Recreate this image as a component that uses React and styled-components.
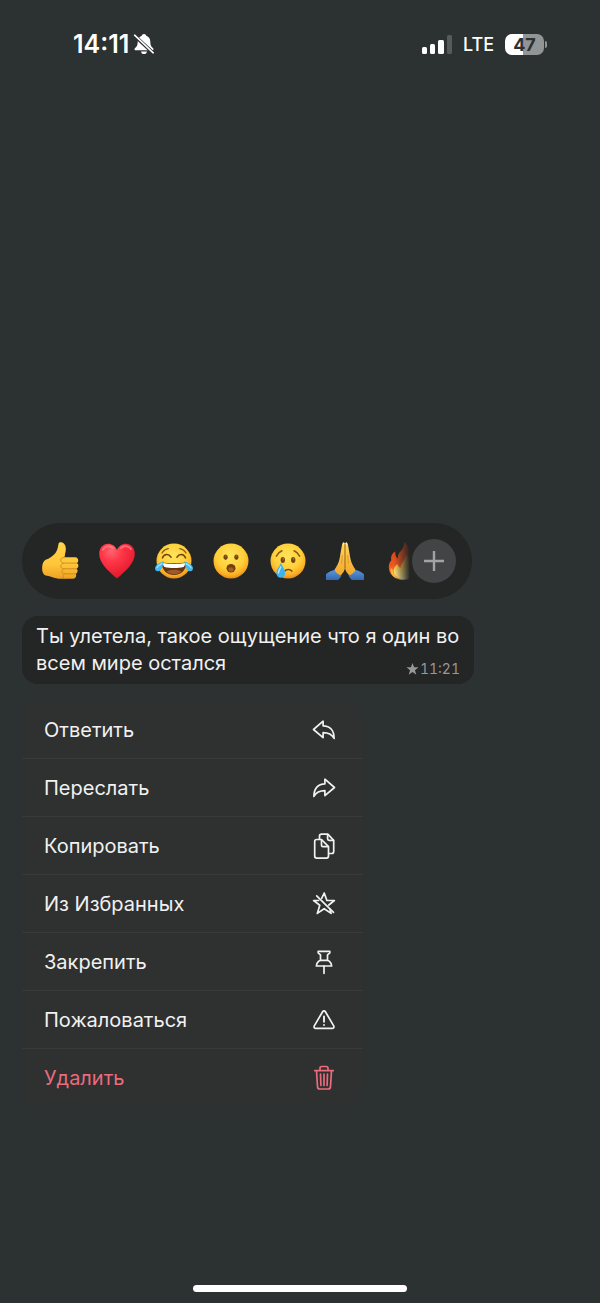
import styled, { createGlobalStyle } from "styled-components";

const App = () => {
  return (
    <Screen>
      <GlobalStyle />
      <StatusBar>
        <Clock>
          <time>14:11</time>
          <BellOff />
        </Clock>
        <Network>
          <Signal />
          <Carrier>LTE</Carrier>
          <Battery>
            <Charge>47</Charge>
            <BatteryTip />
          </Battery>
        </Network>
      </StatusBar>

      <Stage>
        <ReactionBar>
          <ReactionList>
            {reactions.map(({ label, Icon }) => (
              <Reaction key={label} type="button" aria-label={label}>
                <Icon />
              </Reaction>
            ))}
          </ReactionList>
          <MoreButton type="button" aria-label="Ещё">
            <svg width="22" height="22" viewBox="0 0 22 22" fill="none" stroke="#a3a3a4" strokeWidth="2.4">
              <path d="M11 1v20M1 11h20" />
            </svg>
          </MoreButton>
        </ReactionBar>

        <Message>
          <span>Ты улетела, такое ощущение что я один во всем мире остался</span>
          <Meta>
            <svg width="13" height="12" viewBox="0 0 24 23" fill="currentColor">
              <path d="M12 0l3 8.300h8.600l-6.900 5.400 2.600 8.800-7.300-5.200-7.300 5.200 2.600-8.800L.4 8.300H9z" />
            </svg>
            <time>11:21</time>
          </Meta>
        </Message>

        <Menu>
          {actions.map(({ label, Icon, danger }) => (
            <MenuItem key={label}>
              <MenuButton type="button" $danger={danger}>
                {label}
                <Icon />
              </MenuButton>
            </MenuItem>
          ))}
        </Menu>
      </Stage>

      <HomeArea>
        <HomeIndicator />
      </HomeArea>
    </Screen>
  );
};

export default App;

// status bar icons
const BellOff = () => (
  <svg width="22" height="22" viewBox="0 0 22 22">
    <path
      d="M11 1c-1.300 0-2 .8-2.200 1.700C6 3.600 4.700 6 4.700 8.800c0 3.400-.8 4.700-2.300 6-.7.7-.9 1.100-.9 1.500 0 .7.500 1 1.200 1h16.600c.7 0 1.200-.3 1.200-1 0-.4-.2-.8-.9-1.500-1.500-1.300-2.300-2.600-2.300-6 0-2.800-1.300-5.200-4.100-6.100C13 1.800 12.300 1 11 1z"
      fill="#fff"
    />
    <path d="M8 18.400h6c-.2 1.600-1.400 2.600-3 2.600s-2.800-1-3-2.600z" fill="#fff" />
    <path d="M1 2.200l19.500 18" stroke="#2c3131" strokeWidth="3.600" />
    <path d="M1.600 2.200l18.600 17.600" stroke="#fff" strokeWidth="1.600" strokeLinecap="round" />
  </svg>
);

const Signal = () => (
  <svg width="30" height="19" viewBox="0 0 30 19" fill="#fff">
    <rect x="0" y="12" width="5" height="7" rx="1.500" />
    <rect x="8" y="9" width="5" height="10" rx="1.500" />
    <rect x="16" y="5" width="6" height="14" rx="1.500" />
    <rect x="25" y="0" width="5" height="19" rx="1.500" opacity="0.2" />
  </svg>
);

// reactions
const ThumbUp = () => (
  <svg viewBox="0 0 38 38">
    <defs>
      <linearGradient id="thumbSkin" x1="0" y1="0" x2="0" y2="1">
        <stop offset="0" stopColor="#ffd54b" />
        <stop offset="0.6" stopColor="#ffc63a" />
        <stop offset="1" stopColor="#eda023" />
      </linearGradient>
    </defs>
    <path
      d="M17.600 1.600C18 .2 19.600-.2 21.300.5c2.600 1.100 3.700 3.900 3.500 7-.1 2.500-1 5-1.200 7.800h10.600c1.900 0 3 1.400 3 3.100 0 1.300-.6 2.300-1.600 2.700 1.200.4 1.800 1.400 1.800 2.700 0 1.400-.8 2.500-2 2.900.9.500 1.300 1.400 1.200 2.500-.1 1.200-.9 2.200-2 2.500.5.600.7 1.200.6 2.100-.2 1.800-1.500 2.900-3.400 2.900H23c-5 .5-8.600-.2-12.200-1.700-2.300-1-4.400-1.100-6.200-1.500-2.500-.8-3.500-3.700-3.500-7.200 0-3.900 1.200-7.300 3.600-8.500 3.700-1.500 6.500-3.100 9.600-6.600 2.500-2.900 2.700-6.700 3.300-9.600z"
      fill="url(#thumbSkin)"
    />
    <g fill="none" stroke="#c98a20" strokeWidth="0.900" strokeLinecap="round">
      <path d="M23.500 15.300c-2.600.2-3.800 1.400-3.800 3 0 1.500 1 2.700 2.800 2.800h13" />
      <path d="M22.500 21.200c-3.600.3-3.700 5.400 0 5.600h12.600" />
      <path d="M23 26.900c-2.800.4-2.900 4.600 0 4.900h11" />
      <path d="M23.500 31.900c-2.200.7-2.200 4.200.4 4.800" />
    </g>
  </svg>
);

const Heart = () => (
  <svg viewBox="0 0 38 38">
    <defs>
      <radialGradient id="heartRed" cx="0.35" cy="0.22" r="0.85">
        <stop offset="0" stopColor="#ff6470" />
        <stop offset="0.35" stopColor="#ff3647" />
        <stop offset="1" stopColor="#dc1428" />
      </radialGradient>
    </defs>
    <path
      d="M19 36.500C11 29.500 1.200 21.500 1.200 11.700 1.200 6 5 1.800 10 1.800c4 0 7.300 2.200 9 6.200 1.700-4 5-6.200 9-6.200 5 0 8.800 4.200 8.800 9.900 0 9.800-9.800 17.800-17.800 24.800z"
      fill="url(#heartRed)"
    />
    <path d="M5 7.500c2-3.700 7-4.600 10.200-1.400M23 6c3.300-3.100 8-2.200 10 1.200" fill="none" stroke="#ff9098" strokeWidth="2" strokeLinecap="round" opacity="0.6" />
  </svg>
);

const Face = ({ id, children }) => (
  <svg viewBox="0 0 38 38">
    <defs>
      <radialGradient id={id} cx="0.48" cy="0.35" r="0.65">
        <stop offset="0" stopColor="#ffe45a" />
        <stop offset="0.6" stopColor="#ffcf39" />
        <stop offset="0.85" stopColor="#faae25" />
        <stop offset="1" stopColor="#e88b19" />
      </radialGradient>
    </defs>
    <circle cx="19" cy="19" r="17.500" fill={`url(#${id})`} />
    {children}
  </svg>
);

const Joy = () => (
  <Face id="joyFace">
    <path d="M7.500 15.800c1.800-4.300 6.200-4.400 8.500-.6M22 15.200c2.300-3.800 6.700-3.700 8.500.6" fill="none" stroke="#704012" strokeWidth="1.600" strokeLinecap="round" />
    <path d="M7 11c1.600-2.500 3.800-4 6.300-4.300M31 11c-1.600-2.500-3.800-4-6.300-4.300" fill="none" stroke="#8c5517" strokeWidth="1.300" strokeLinecap="round" />
    <path d="M6.500 20.300c7 1.300 18 1.300 25 0C31.300 27.800 26.500 33 19 33S6.700 27.800 6.500 20.300z" fill="#61360f" />
    <path d="M7.700 21c7 1.200 15.600 1.200 22.600 0-.2 1.800-.8 3-1.800 4-5.500 1.300-13.500 1.300-19 0-1-1-1.600-2.200-1.800-4z" fill="#fff" />
    <path d="M11.500 29.400c4.300-2.300 10.700-2.300 15 0-3.800 3.700-11.200 3.700-15 0z" fill="#a5562c" />
    <path d="M8.700 19.200C8 24 6.400 29 3 29.200.6 29.300-.5 27.300.3 25c1-2.800 4.700-4.500 8.400-5.800z" fill="#40b9f4" />
    <path d="M29.300 19.200c.7 4.800 2.300 9.800 5.700 10 2.400.1 3.500-1.900 2.700-4.200-1-2.800-4.700-4.500-8.400-5.800z" fill="#40b9f4" />
    <path d="M6.800 21.600c-2.300 1.200-4.300 2.600-4.800 4.100M31.200 21.600c2.300 1.200 4.300 2.600 4.800 4.100" fill="none" stroke="#a3e4ff" strokeWidth="1.200" strokeLinecap="round" />
  </Face>
);

const Wow = () => (
  <Face id="wowFace">
    <ellipse cx="13.600" cy="15.200" rx="2.100" ry="2.700" fill="#764611" />
    <ellipse cx="24.400" cy="15.200" rx="2.100" ry="2.700" fill="#764611" />
    <circle cx="13.900" cy="14" r="0.700" fill="#b27a2d" />
    <circle cx="24.700" cy="14" r="0.700" fill="#b27a2d" />
    <ellipse cx="19" cy="26.300" rx="4.500" ry="4.200" fill="#733f0d" />
    <ellipse cx="19" cy="27.500" rx="2.600" ry="2.200" fill="#a2601c" />
  </Face>
);

const Cry = () => (
  <Face id="cryFace">
    <path d="M7.400 14.200c1.300-2.700 3-4.400 5.500-5.400M30.600 14.200c-1.300-2.700-3-4.400-5.500-5.400" fill="none" stroke="#8c5517" strokeWidth="1.500" strokeLinecap="round" />
    <ellipse cx="13.800" cy="18" rx="2.200" ry="2.900" fill="#764611" />
    <ellipse cx="24.200" cy="18" rx="2.200" ry="2.900" fill="#764611" />
    <circle cx="14.200" cy="16.800" r="0.700" fill="#c59044" />
    <circle cx="24.600" cy="16.800" r="0.700" fill="#c59044" />
    <path d="M15.500 29.400c1.800-2.400 5.400-2.500 7.300-.3" fill="none" stroke="#764611" strokeWidth="1.500" strokeLinecap="round" />
    <path d="M12 20.500c-1.300 4-4.600 6.700-4.600 10.400 0 3 1.900 4.900 4.300 4.900s4.500-1.900 4.500-4.700c0-4-3.300-6.600-4.200-10.600z" fill="#3eb3ec" />
    <path d="M11.700 25c-.7 2.200-2.400 3.800-2.300 6" fill="none" stroke="#b5eaff" strokeWidth="1.500" strokeLinecap="round" />
  </Face>
);

const Pray = () => (
  <svg viewBox="0 0 38 38">
    <defs>
      <linearGradient id="praySkin" x1="0" y1="0" x2="0" y2="1">
        <stop offset="0" stopColor="#ffd75c" />
        <stop offset="1" stopColor="#f2a72c" />
      </linearGradient>
      <linearGradient id="praySleeve" x1="0" y1="0" x2="0" y2="1">
        <stop offset="0" stopColor="#5b98dd" />
        <stop offset="1" stopColor="#3569ae" />
      </linearGradient>
    </defs>
    <path d="M10 27.500C5.500 28.500.8 30.800 0 32.500V38h12c2-1.500 3.200-3.300 3.500-5.500L10 27.500zM28 27.500c4.500 1 9.200 3.300 10 5V38H26c-2-1.500-3.200-3.300-3.500-5.500z" fill="url(#praySleeve)" />
    <path
      d="M18.900 1.200c-1.400-1-2.700-.2-2.900 1.600L13.700 16c-.7 5-3.200 8.300-5.200 11.800 1.300 2.800 3.500 4.700 6.200 5.400 2.500-1.900 4-4.800 4.300-7.700.3 2.900 1.800 5.800 4.300 7.700 2.700-.7 4.900-2.600 6.200-5.400-2-3.500-4.500-6.800-5.200-11.800L22 2.800C21.800 1 20.300.2 18.900 1.200z"
      fill="url(#praySkin)"
    />
    <path d="M19 2v23.500" fill="none" stroke="#a86517" strokeWidth="1.100" strokeLinecap="round" />
    <path d="M16.300 13.500l-.7 8M21.700 13.500l.7 8" fill="none" stroke="#d18d25" strokeWidth="0.800" strokeLinecap="round" />
    <path d="M17.500.9v1.800M20.500.9v1.800" stroke="#ffe8b0" strokeWidth="1.300" strokeLinecap="round" />
  </svg>
);

const Fire = () => (
  <svg viewBox="0 0 38 38">
    <defs>
      <linearGradient id="fireOuter" x1="0.300" y1="0" x2="0.500" y2="1">
        <stop offset="0" stopColor="#c93e18" />
        <stop offset="0.55" stopColor="#f0561f" />
        <stop offset="1" stopColor="#ffa92b" />
      </linearGradient>
      <linearGradient id="fireInner" x1="0" y1="0" x2="0" y2="1">
        <stop offset="0" stopColor="#ff9f35" />
        <stop offset="0.600" stopColor="#ffd95c" />
        <stop offset="1" stopColor="#fff3b5" />
      </linearGradient>
    </defs>
    <path
      d="M21 0c.6 4.500-1.400 7-4 10-1.700 2-2.400 4-2 6.400-1.800-.9-2.900-2.600-2.600-7.100C8.800 11.500 7.500 14.500 8.300 18.200 6 20.500 5.500 23.500 6 27c1 6.500 6.500 10.800 14 10.900C28.500 38 35 33 35 25c0-5-3-8-4.500-12-1.300 1.200-1.800 2.800-1.700 4.800C27 12 27 4.500 21 0z"
      fill="url(#fireOuter)"
    />
    <path d="M23 12c-1 6.500-4.700 9-5.500 14-1.700-.8-2.700-2.200-3-4-2.500 2-4.300 4.800-3.800 8 .8 4.500 5 7.300 10.300 7.300 6 0 10.200-3.500 10.200-9 0-6-5.200-10-8.200-16.300z" fill="url(#fireInner)" />
    <path d="M8.500 27.500c.2 3 1.500 5.700 4.500 7.800" fill="none" stroke="#ffbd3b" strokeWidth="2" strokeLinecap="round" />
  </svg>
);

// menu icons
const Line = ({ children }) => (
  <svg width="26" height="28" viewBox="0 0 26 28" fill="none" stroke="currentColor" strokeWidth="1.700" strokeLinejoin="round" strokeLinecap="round">
    {children}
  </svg>
);

const Reply = () => (
  <Line>
    <path d="M12.100 5.200v4.600c6.800 0 11 4.500 11 12.600-2.200-4-5.500-5.700-11-5.700v4.900L2.500 13.500z" />
  </Line>
);

const Forward = () => (
  <Line>
    <path d="M13.900 5.200v4.600c-6.800 0-11 4.500-11 12.600 2.200-4 5.500-5.700 11-5.700v4.900l9.600-8.100z" />
  </Line>
);

const Copy = () => (
  <Line>
    <path d="M8.500 7V4.200c0-1.200.8-2 2-2h6.300l5.900 6.100v11.200c0 1.200-.8 2-2 2H18" />
    <path d="M16.600 2.500v4.300c0 1 .5 1.500 1.500 1.500h4.300" />
    <path d="M5.700 7.500h4.800l7 7.200v9.400c0 1.200-.8 2-2 2H5.700c-1.200 0-2-.8-2-2V9.500c0-1.200.8-2 2-2z" />
    <path d="M10.500 7.800v5.400c0 1 .5 1.500 1.500 1.500h5.200" />
  </Line>
);

const Unstar = () => (
  <Line>
    <path d="M10.800 8.200L13.200 3l2.700 7.500h7.500l-5.600 4.500M19 19.300l1.100 4.100-6.900-4.700-6.900 4.700 2.500-8.200-6.200-4.700h5" />
    <path d="M5.700 5.800l16.800 16.600" />
  </Line>
);

const Pin = () => (
  <Line>
    <path d="M7.200 3.300h11.600v1.600l-2.300 2v5.400c2.400 1 3.900 2.900 4.100 5.700H5.400c.2-2.800 1.700-4.700 4.100-5.700V6.900l-2.300-2z" />
    <path d="M9.500 12.300h7M13 18v7.300" />
  </Line>
);

const Warning = () => (
  <Line>
    <path d="M11.600 5.700c.7-1.200 2.100-1.200 2.800 0l8.300 14.200c.7 1.200 0 2.500-1.400 2.500H4.700c-1.400 0-2.100-1.300-1.400-2.500z" />
    <path d="M13 10.500v5.300M13 19v.1" strokeWidth="1.900" />
  </Line>
);

const Trash = () => (
  <Line>
    <path d="M3.700 6.600h18.600M9 6.400V4.200c0-1 .7-1.700 1.700-1.700h4.600c1 0 1.700.7 1.700 1.700v2.200" />
    <path d="M5.500 6.800l1 15.800c.1 1.500 1 2.400 2.400 2.400h8.200c1.400 0 2.300-.9 2.400-2.400l1-15.800M9.500 10.200l.4 11.300M13 10.200v11.300M16.500 10.200l-.4 11.300" />
  </Line>
);

const reactions = [
  { label: "Нравится", Icon: ThumbUp },
  { label: "Сердце", Icon: Heart },
  { label: "Смех", Icon: Joy },
  { label: "Удивление", Icon: Wow },
  { label: "Грусть", Icon: Cry },
  { label: "Спасибо", Icon: Pray },
  { label: "Огонь", Icon: Fire },
];

const actions = [
  { label: "Ответить", Icon: Reply },
  { label: "Переслать", Icon: Forward },
  { label: "Копировать", Icon: Copy },
  { label: "Из Избранных", Icon: Unstar },
  { label: "Закрепить", Icon: Pin },
  { label: "Пожаловаться", Icon: Warning },
  { label: "Удалить", Icon: Trash, danger: true },
];

const GlobalStyle = createGlobalStyle`
  * {
    box-sizing: border-box;
  }
  body {
    margin: 0;
    background: #2c3131;
    color: #f1f1f1;
    font-family: Inter, "Liberation Sans", sans-serif;
  }
  button {
    border: 0;
    padding: 0;
    background: none;
    color: inherit;
    font: inherit;
    cursor: pointer;
  }
  svg {
    display: block;
    flex-shrink: 0;
  }
`;

const Screen = styled.main`
  display: flex;
  flex-direction: column;
  min-height: 100vh;
`;

const StatusBar = styled.header`
  display: flex;
  justify-content: space-between;
  align-items: center;
  height: 88px;
  padding: 0 53px 0 73px;
  color: #fff;
`;

const Clock = styled.div`
  display: flex;
  align-items: center;
  gap: 4px;
  font-size: 25px;
  font-weight: 600;
`;

const Network = styled.div`
  display: flex;
  align-items: center;
  gap: 11px;
`;

const Carrier = styled.span`
  font-size: 18px;
  font-weight: 500;
`;

const Battery = styled.div`
  display: flex;
  align-items: center;
  gap: 1px;
`;

const Charge = styled.span`
  width: 39px;
  border-radius: 7px;
  background: linear-gradient(90deg, #fff 47%, #929595 47%);
  color: #2c3131;
  font-size: 18px;
  font-weight: 700;
  line-height: 21px;
  text-align: center;
`;

const BatteryTip = styled.span`
  width: 2px;
  height: 7px;
  border-radius: 0 2px 2px 0;
  background: #929595;
`;

const Stage = styled.section`
  display: flex;
  flex: 1;
  flex-direction: column;
  justify-content: flex-end;
  gap: 17px;
  padding: 24px 22px 179px;
`;

const ReactionBar = styled.div`
  display: flex;
  align-items: center;
  width: 100%;
  max-width: 450px;
  height: 76px;
  padding: 0 16px 0 19px;
  border-radius: 38px;
  background: #242525;
`;

const ReactionList = styled.div`
  display: flex;
  flex: 1;
  gap: 19px;
  min-width: 0;
  overflow: hidden;
  mask-image: linear-gradient(to left, transparent 2px, #000 18px);
`;

const Reaction = styled.button`
  flex: 0 0 38px;
  height: 38px;
`;

const MoreButton = styled.button`
  display: flex;
  flex: 0 0 44px;
  align-items: center;
  justify-content: center;
  height: 44px;
  border-radius: 50%;
  background: #434445;
`;

const Message = styled.article`
  width: 100%;
  max-width: 452px;
  padding: 7px 14px;
  border-radius: 16px;
  background: #242525;
  font-size: 20px;
  line-height: 27px;
`;

// floats into the free end of the last text line
const Meta = styled.div`
  display: flex;
  float: right;
  align-items: center;
  gap: 1px;
  margin-top: 11px;
  color: #979898;
  font-size: 14px;
  font-variant-numeric: tabular-nums;
  line-height: 16px;
`;

const Menu = styled.ul`
  width: 100%;
  max-width: 341px;
  margin: 0;
  padding: 0;
  border-radius: 16px;
  background: #2f3030;
  list-style: none;
`;

const MenuItem = styled.li`
  & + & {
    border-top: 1px solid #383939;
  }
`;

const MenuButton = styled.button`
  display: flex;
  align-items: center;
  justify-content: space-between;
  width: 100%;
  height: 57px;
  padding: 0 26px 0 22px;
  color: ${(props) => (props.$danger ? "#ea6b7c" : "inherit")};
  font-size: 20px;
  text-align: left;
`;

const HomeArea = styled.footer`
  display: flex;
  justify-content: center;
  padding-bottom: 11px;
`;

const HomeIndicator = styled.div`
  width: 214px;
  height: 7px;
  border-radius: 4px;
  background: #fff;
`;
